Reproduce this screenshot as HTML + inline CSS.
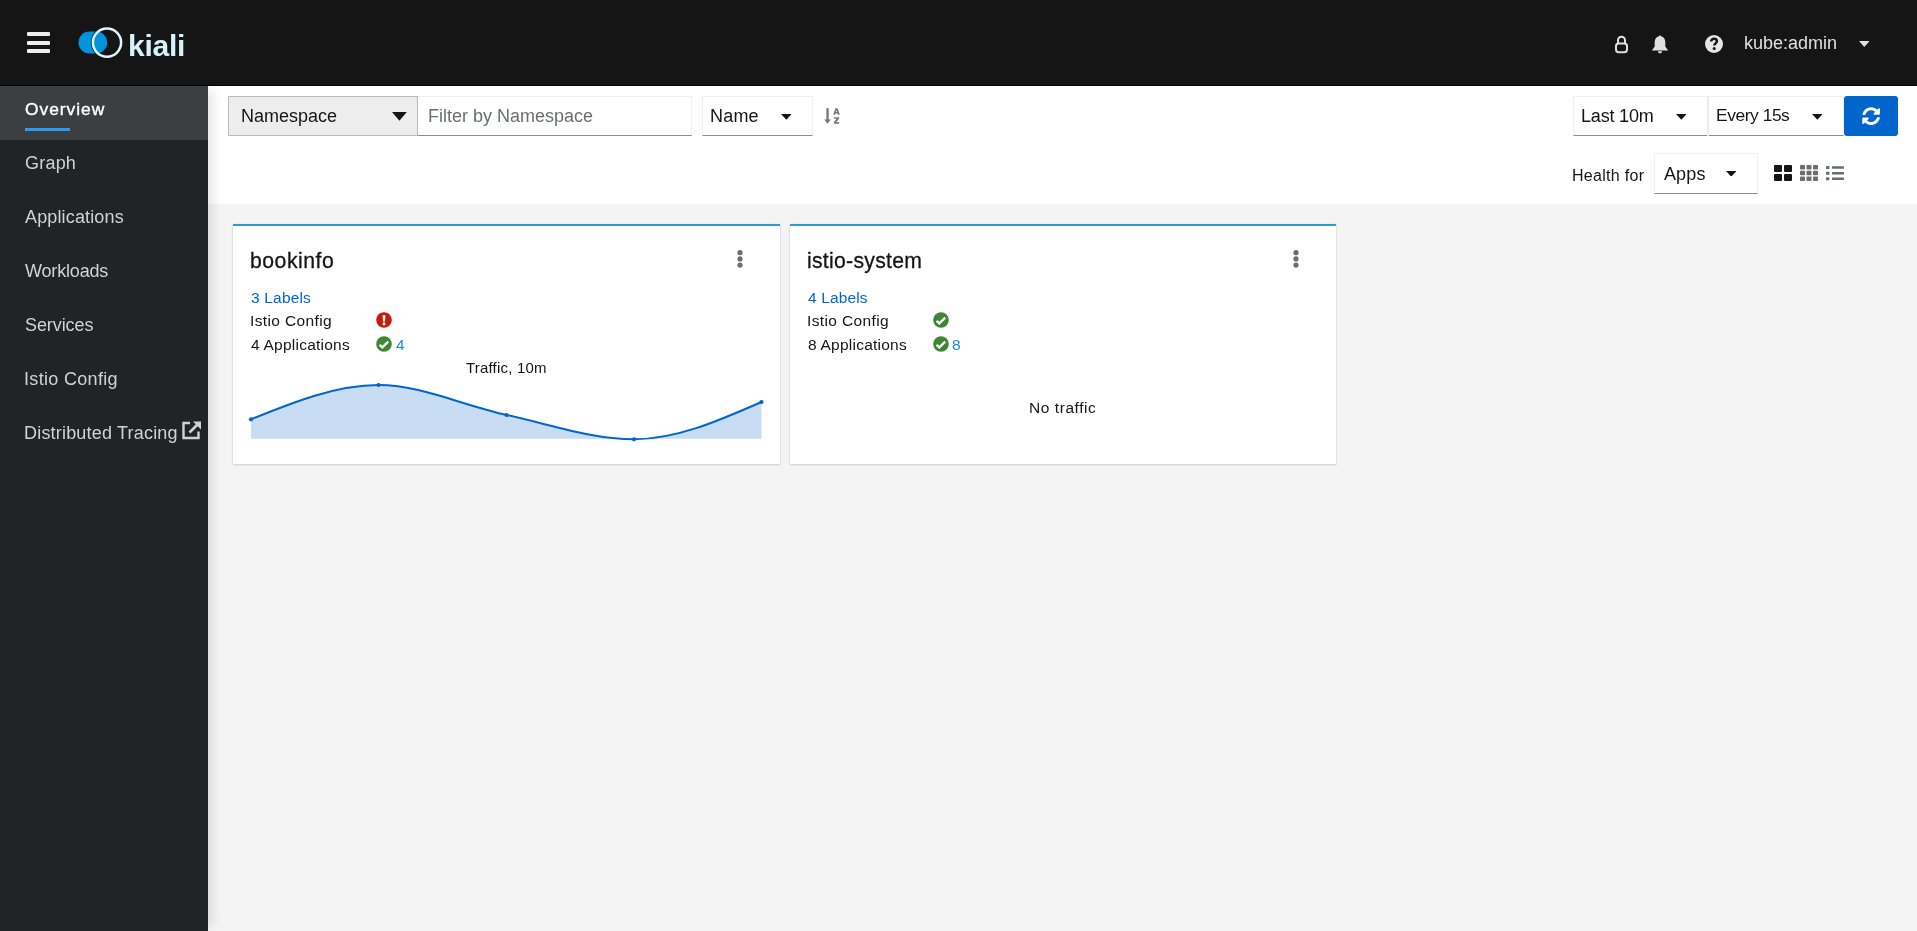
<!DOCTYPE html>
<html><head><meta charset="utf-8"><title>Kiali</title>
<style>
html,body{margin:0;padding:0}
body{width:1917px;height:931px;overflow:hidden;position:relative;background:#f4f4f4;font-family:"Liberation Sans",sans-serif}
.a{position:absolute;display:block}
.t{position:absolute;white-space:nowrap;line-height:1;will-change:transform}
</style></head><body>
<div class="a" style="left:0;top:0;width:1917px;height:85px;background:#151515;border-bottom:1px solid #020202"></div>
<div class="a" style="left:27px;top:32px;width:23px;height:4px;background:#ededed;border-radius:1px"></div>
<div class="a" style="left:27px;top:40.5px;width:23px;height:4px;background:#ededed;border-radius:1px"></div>
<div class="a" style="left:27px;top:49px;width:23px;height:4px;background:#ededed;border-radius:1px"></div>
<svg class="a" style="left:70px;top:20px" width="60" height="45" viewBox="70 20 60 45">
<path d="M89.5,31.5 A11,11 0 0 0 89.5,53.5 L96,53.5 A11.2,11 0 0 0 107.2,42.5 A11.2,11 0 0 0 96,31.5 Z" fill="#0093dd"/>
<circle cx="107" cy="42.6" r="15.4" fill="none" stroke="#151515" stroke-width="1.2"/>
<circle cx="107" cy="42.6" r="14.1" fill="none" stroke="#dff6fd" stroke-width="2.5"/>
</svg>
<div class="t" style="left:127.91px;top:30.61px;font-size:30px;font-weight:700;color:#d6f2fb;letter-spacing:-0.239px;">kiali</div>
<svg class="a" style="left:1612px;top:33px" width="20" height="24" viewBox="0 0 20 24">
<path d="M6,10.5 V7.2 A3.5,3.5 0 0 1 13,7.2 V10.5" fill="none" stroke="#e0e0e0" stroke-width="2"/>
<rect x="4" y="10.6" width="11" height="8.6" rx="2.6" fill="none" stroke="#e0e0e0" stroke-width="2"/>
</svg>
<svg class="a" style="left:1650px;top:33.4px" width="20" height="22" viewBox="0 0 20 22">
<path d="M10,2.4 C10.8,2.4 11,2.9 11,3.3 C14,3.9 15.3,6.3 15.3,9.6 L15.3,13.6 L18.2,17.4 L1.8,17.4 L4.7,13.6 L4.7,9.6 C4.7,6.3 6,3.9 9,3.3 C9,2.9 9.2,2.4 10,2.4 Z" fill="#e0e0e0"/>
<path d="M7.9,18.3 A2.1,2.1 0 0 0 12.1,18.3 Z" fill="#e0e0e0"/>
</svg>
<svg class="a" style="left:1704px;top:34px" width="20" height="20" viewBox="0 0 20 20">
<circle cx="10" cy="10" r="9" fill="#e6e6e6"/>
<path d="M7.1,7.6 C7.1,5.9 8.3,4.8 10,4.8 C11.7,4.8 12.9,5.9 12.9,7.3 C12.9,9.3 10.3,9.4 10.3,11.6" fill="none" stroke="#151515" stroke-width="2.5"/>
<circle cx="10.2" cy="14.6" r="1.5" fill="#151515"/>
</svg>
<div class="t" style="left:1744.39px;top:33.66px;font-size:18px;color:#e0e0e0;letter-spacing:0.003px;">kube:admin</div>
<svg class="a" style="left:1858.6px;top:40.6px" width="10.6" height="6" viewBox="0 0 10.6 6"><path d="M0,0 L10.6,0 L5.3,6 Z" fill="#e0e0e0"/></svg>
<div class="a" style="left:0;top:86px;width:208px;height:845px;background:#212427;box-shadow:10px 0 10px -5px rgba(3,3,3,0.10);z-index:2"></div>
<div class="a" style="left:0;top:86px;width:208px;height:54px;background:#3c3f42;z-index:3"></div>
<div class="a" style="left:25px;top:128px;width:45px;height:3px;background:#2b9af3;z-index:3"></div>
<div class="t" style="left:24.68px;top:100.87px;font-size:17.4px;color:#ffffff;letter-spacing:0.967px;z-index:4;-webkit-text-stroke:0.38px #fff;">Overview</div>
<div class="t" style="left:24.59px;top:153.76px;font-size:18px;color:#d2d2d2;letter-spacing:0.212px;z-index:4;">Graph</div>
<div class="t" style="left:25.46px;top:207.96px;font-size:18px;color:#d2d2d2;letter-spacing:0.148px;z-index:4;">Applications</div>
<div class="t" style="left:25.42px;top:261.76px;font-size:18px;color:#d2d2d2;letter-spacing:-0.174px;z-index:4;">Workloads</div>
<div class="t" style="left:24.68px;top:315.76px;font-size:18px;color:#d2d2d2;letter-spacing:-0.079px;z-index:4;">Services</div>
<div class="t" style="left:23.84px;top:369.76px;font-size:18px;color:#d2d2d2;letter-spacing:0.325px;z-index:4;">Istio Config</div>
<div class="t" style="left:24.02px;top:424.06px;font-size:18px;color:#d2d2d2;letter-spacing:0.193px;z-index:4;">Distributed Tracing</div>
<svg class="a" style="left:181px;top:419px;z-index:4" width="22" height="22" viewBox="0 0 22 22">
<path d="M9,4 H2.5 V19 H17.5 V12.5" fill="none" stroke="#d2d2d2" stroke-width="2.4"/>
<path d="M12,2.6 H20 V10.6 Z" fill="#d2d2d2"/>
<path d="M8.5,13.5 L17,5" stroke="#d2d2d2" stroke-width="2.6"/>
</svg>
<div class="a" style="left:208px;top:86px;width:1709px;height:118px;background:#ffffff"></div>
<div class="a" style="left:228px;top:96px;width:188px;height:38px;background:#ededed;border:1px solid #b8bbbe"></div>
<div class="t" style="left:241.32px;top:107.06px;font-size:18px;color:#151515;letter-spacing:-0.009px;">Namespace</div>
<svg class="a" style="left:392.3px;top:111.9px" width="14.8" height="8.8" viewBox="0 0 14.8 8.8"><path d="M0,0 L14.8,0 L7.4,8.8 Z" fill="#151515"/></svg>
<div class="a" style="left:418px;top:96px;width:273px;height:38px;background:#fff;border:1px solid #f0f0f0;border-bottom-color:#8a8d90;border-left:none"></div>
<div class="t" style="left:427.52px;top:107.16px;font-size:18px;color:#6a6e73;letter-spacing:0.001px;">Filter by Namespace</div>
<div class="a" style="left:702px;top:96px;width:109px;height:38px;background:#fff;border:1px solid #f0f0f0;border-bottom-color:#8a8d90"></div>
<div class="t" style="left:710.22px;top:106.76px;font-size:18px;color:#151515;letter-spacing:0.187px;">Name</div>
<svg class="a" style="left:780.6px;top:113.8px" width="10.6" height="5.8" viewBox="0 0 10.6 5.8"><path d="M0,0 L10.6,0 L5.3,5.8 Z" fill="#151515"/></svg>
<svg class="a" style="left:822px;top:106px" width="20" height="20" viewBox="0 0 20 20">
<path d="M5.55,2.2 V14" stroke="#72767b" stroke-width="2.3"/>
<path d="M2.2,13.4 L8.9,13.4 L5.55,17.8 Z" fill="#72767b"/>
<path fill-rule="evenodd" d="M11.2,8.8 L13.4,2.2 L15.6,2.2 L17.8,8.8 L15.9,8.8 L15.5,7.5 L13.5,7.5 L13.1,8.8 Z M13.9,6.1 L15.1,6.1 L14.5,4.2 Z" fill="#72767b"/>
<path d="M11.9,11.2 H17.1 V12.8 L14.3,16.1 H17.1 V17.7 H11.9 V16.1 L14.7,12.8 H11.9 Z" fill="#72767b"/>
</svg>
<div class="a" style="left:1573px;top:96px;width:133px;height:38px;background:#fff;border:1px solid #f0f0f0;border-bottom-color:#8a8d90"></div>
<div class="t" style="left:1581.02px;top:106.76px;font-size:18px;color:#151515;letter-spacing:-0.182px;">Last 10m</div>
<svg class="a" style="left:1675.6px;top:113.8px" width="10.6" height="5.8" viewBox="0 0 10.6 5.8"><path d="M0,0 L10.6,0 L5.3,5.8 Z" fill="#151515"/></svg>
<div class="a" style="left:1707px;top:96px;width:136px;height:38px;background:#fff;border:1px solid #f0f0f0;border-bottom-color:#8a8d90;border-left:none"></div>
<div class="a" style="left:1707px;top:96px;width:2px;height:40px;background:#ebebeb"></div>
<div class="t" style="left:1716.07px;top:107.27px;font-size:17.4px;color:#151515;letter-spacing:-0.439px;">Every 15s</div>
<svg class="a" style="left:1811.7px;top:113.8px" width="10.6" height="5.8" viewBox="0 0 10.6 5.8"><path d="M0,0 L10.6,0 L5.3,5.8 Z" fill="#151515"/></svg>
<div class="a" style="left:1844px;top:96px;width:54px;height:40px;background:#0066cc;border-radius:3px"></div>
<svg class="a" style="left:1861.9px;top:106.5px" width="18.3" height="18.3" viewBox="0 0 512 512">
<path fill="#fff" d="M370.72 133.28C339.458 104.008 298.888 87.962 255.848 88c-77.458.068-144.328 53.178-162.791 126.85-1.344 5.363-6.122 9.15-11.651 9.15H24.103c-7.498 0-13.194-6.807-11.807-14.176C33.933 94.924 134.813 8 256 8c66.448 0 126.791 26.136 171.315 68.685L463.03 40.97C478.149 25.851 504 36.559 504 57.941V192c0 13.255-10.745 24-24 24H345.941c-21.382 0-32.090-25.851-16.971-40.971l41.750-41.749zM32 296h134.059c21.382 0 32.090 25.851 16.971 40.971l-41.750 41.750c31.262 29.273 71.835 45.319 114.876 45.280 77.418-.070 144.315-53.144 162.787-126.849 1.344-5.363 6.122-9.150 11.651-9.150h57.304c7.498 0 13.194 6.807 11.807 14.176C478.067 417.076 377.187 504 256 504c-66.448 0-126.791-26.136-171.315-68.685L48.970 471.030C33.851 486.149 8 475.441 8 454.059V320c0-13.255 10.745-24 24-24z"/>
</svg>
<div class="t" style="left:1572.29px;top:167.76px;font-size:16px;color:#151515;letter-spacing:0.29px;">Health for</div>
<div class="a" style="left:1654px;top:153px;width:102px;height:39px;background:#fff;border:1px solid #f0f0f0;border-bottom-color:#8a8d90"></div>
<div class="t" style="left:1663.56px;top:164.96px;font-size:18px;color:#151515;letter-spacing:0.119px;">Apps</div>
<svg class="a" style="left:1725.7px;top:170.6px" width="10.4" height="5.7" viewBox="0 0 10.4 5.7"><path d="M0,0 L10.4,0 L5.2,5.7 Z" fill="#151515"/></svg>
<svg class="a" style="left:1774px;top:165px" width="18" height="16" viewBox="0 0 18 16">
<rect x="0" y="0" width="8" height="7" rx="1" fill="#151515"/><rect x="10" y="0" width="8" height="7" rx="1" fill="#151515"/>
<rect x="0" y="9" width="8" height="7" rx="1" fill="#151515"/><rect x="10" y="9" width="8" height="7" rx="1" fill="#151515"/>
</svg>
<svg class="a" style="left:1800px;top:165px" width="18" height="16" viewBox="0 0 18 16">
<rect x="0" y="0" width="5" height="4.4" rx="0.8" fill="#6a6e73"/><rect x="0" y="5.8" width="5" height="4.4" rx="0.8" fill="#6a6e73"/><rect x="0" y="11.6" width="5" height="4.4" rx="0.8" fill="#6a6e73"/><rect x="6.5" y="0" width="5" height="4.4" rx="0.8" fill="#6a6e73"/><rect x="6.5" y="5.8" width="5" height="4.4" rx="0.8" fill="#6a6e73"/><rect x="6.5" y="11.6" width="5" height="4.4" rx="0.8" fill="#6a6e73"/><rect x="13" y="0" width="5" height="4.4" rx="0.8" fill="#6a6e73"/><rect x="13" y="5.8" width="5" height="4.4" rx="0.8" fill="#6a6e73"/><rect x="13" y="11.6" width="5" height="4.4" rx="0.8" fill="#6a6e73"/>
</svg>
<svg class="a" style="left:1826px;top:165px" width="18" height="16" viewBox="0 0 18 16">
<rect x="0" y="1" width="3.4" height="3" rx="0.6" fill="#6a6e73"/><rect x="0" y="6.8" width="3.4" height="3" rx="0.6" fill="#6a6e73"/><rect x="0" y="12.3" width="3.4" height="3" rx="0.6" fill="#6a6e73"/>
<rect x="6" y="1.2" width="12" height="2.6" rx="0.6" fill="#6a6e73"/><rect x="6" y="7" width="12" height="2.6" rx="0.6" fill="#6a6e73"/><rect x="6" y="12.4" width="12" height="2.6" rx="0.6" fill="#6a6e73"/>
</svg>
<div class="a" style="left:233px;top:224px;width:547px;height:240px;background:#fff;border-top:2px solid #2b9ad9;box-sizing:border-box;box-shadow:0 1px 2px 0 rgba(3,3,3,.14),0 0 2px 0 rgba(3,3,3,.08)"></div>
<div class="t" style="left:250.23px;top:249.95px;font-size:21.2px;color:#151515;letter-spacing:0.515px;-webkit-text-stroke:0.3px #151515;">bookinfo</div>
<svg class="a" style="left:735px;top:245px" width="10" height="28" viewBox="0 0 10 28"><circle cx="5" cy="7.699999999999989" r="2.6" fill="#6a6e73"/><circle cx="5" cy="13.899999999999977" r="2.6" fill="#6a6e73"/><circle cx="5" cy="20.100000000000023" r="2.6" fill="#6a6e73"/></svg>
<div class="t" style="left:251.01px;top:289.68px;font-size:15.5px;color:#0066cc;letter-spacing:0.178px;">3 Labels</div>
<div class="t" style="left:250.17px;top:312.58px;font-size:15.5px;color:#151515;letter-spacing:0.381px;">Istio Config</div>
<div class="t" style="left:251.24px;top:336.68px;font-size:15.5px;color:#151515;letter-spacing:0.232px;">4 Applications</div>
<svg class="a" style="left:376px;top:312px" width="16" height="16" viewBox="0 0 16 16"><circle cx="8" cy="8" r="7.8" fill="#c9190b"/><path d="M6.6,3.3 H9.4 L9,9.6 H7 Z" fill="#fff"/><circle cx="8" cy="12" r="1.45" fill="#fff"/></svg>
<svg class="a" style="left:376px;top:336px" width="16" height="16" viewBox="0 0 16 16"><circle cx="8" cy="8" r="7.8" fill="#3e8635"/><path d="M3.6,8.9 L6.3,11.4 L12.2,5.6" fill="none" stroke="#fff" stroke-width="2.2"/></svg>
<div class="t" style="left:395.64px;top:336.68px;font-size:15.5px;color:#1a8ad6;letter-spacing:0px;">4</div>
<div class="a" style="left:790px;top:224px;width:546px;height:240px;background:#fff;border-top:2px solid #2b9ad9;box-sizing:border-box;box-shadow:0 1px 2px 0 rgba(3,3,3,.14),0 0 2px 0 rgba(3,3,3,.08)"></div>
<div class="t" style="left:807.18px;top:249.95px;font-size:21.2px;color:#151515;letter-spacing:0.283px;-webkit-text-stroke:0.3px #151515;">istio-system</div>
<svg class="a" style="left:1290.6px;top:245px" width="10" height="28" viewBox="0 0 10 28"><circle cx="5" cy="7.699999999999989" r="2.6" fill="#6a6e73"/><circle cx="5" cy="13.899999999999977" r="2.6" fill="#6a6e73"/><circle cx="5" cy="20.100000000000023" r="2.6" fill="#6a6e73"/></svg>
<div class="t" style="left:808.24px;top:289.68px;font-size:15.5px;color:#0066cc;letter-spacing:0.145px;">4 Labels</div>
<div class="t" style="left:807.17px;top:312.58px;font-size:15.5px;color:#151515;letter-spacing:0.381px;">Istio Config</div>
<div class="t" style="left:807.93px;top:336.68px;font-size:15.5px;color:#151515;letter-spacing:0.233px;">8 Applications</div>
<svg class="a" style="left:933px;top:312px" width="16" height="16" viewBox="0 0 16 16"><circle cx="8" cy="8" r="7.8" fill="#3e8635"/><path d="M3.6,8.9 L6.3,11.4 L12.2,5.6" fill="none" stroke="#fff" stroke-width="2.2"/></svg>
<svg class="a" style="left:933px;top:336px" width="16" height="16" viewBox="0 0 16 16"><circle cx="8" cy="8" r="7.8" fill="#3e8635"/><path d="M3.6,8.9 L6.3,11.4 L12.2,5.6" fill="none" stroke="#fff" stroke-width="2.2"/></svg>
<div class="t" style="left:952.03px;top:336.68px;font-size:15.5px;color:#1a8ad6;letter-spacing:0px;">8</div>
<svg class="a" style="left:0;top:0" width="1917" height="931" viewBox="0 0 1917 931">
<path d="M251.00,419.30 C293.50,402.15 336.00,385.00 378.50,385.00 C421.17,385.00 463.83,405.94 506.50,415.00 C549.00,424.03 591.50,439.30 634.00,439.30 C676.50,439.30 719.00,420.65 761.50,402.00 L761.5,438.7 L251,438.7 Z" fill="#c8ddf3"/>
<path d="M251.00,419.30 C293.50,402.15 336.00,385.00 378.50,385.00 C421.17,385.00 463.83,405.94 506.50,415.00 C549.00,424.03 591.50,439.30 634.00,439.30 C676.50,439.30 719.00,420.65 761.50,402.00" fill="none" stroke="#0066cc" stroke-width="2"/>
<circle cx="251" cy="419.3" r="2.1" fill="#0066cc"/><circle cx="378.5" cy="385" r="2.1" fill="#0066cc"/><circle cx="506.5" cy="415" r="2.1" fill="#0066cc"/><circle cx="634" cy="439.3" r="2.1" fill="#0066cc"/><circle cx="761.5" cy="402" r="2.1" fill="#0066cc"/>
</svg>
<div class="t" style="left:465.86px;top:360.10px;font-size:15px;color:#151515;letter-spacing:0.195px;">Traffic, 10m</div>
<div class="t" style="left:1029.43px;top:399.88px;font-size:15.5px;color:#151515;letter-spacing:0.563px;">No traffic</div>
</body></html>
